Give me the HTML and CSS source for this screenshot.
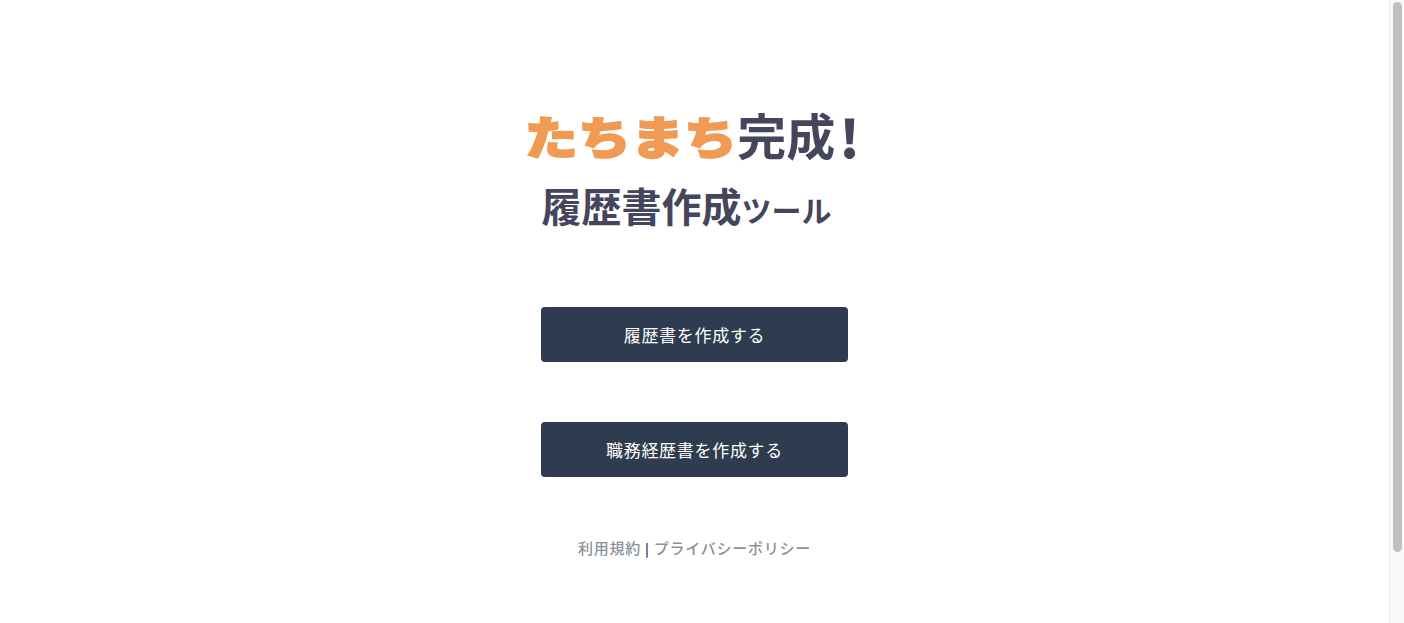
FILE: index.html
```html
<!DOCTYPE html>
<html lang="ja">
<head>
<meta charset="UTF-8">
<meta name="viewport" content="width=device-width, initial-scale=1.0">
<title>履歴書作成ツール</title>
<link rel="stylesheet" href="styles.css">
</head>
<body>

<div class="page">
  <div class="logo">
    <div class="logo-top"><span class="logo-orange">たちまち</span><span class="logo-done">完成</span><span class="logo-mark">!</span></div>
    <div class="logo-bottom">履歴書作成<span class="logo-small">ツール</span></div>
  </div>

  <a class="btn" href="#">履歴書を作成する</a>
  <a class="btn btn-second" href="#">職務経歴書を作成する</a>

  <div class="footer-links">
    <a href="#">利用規約</a> <span class="sep">|</span> <a href="#">プライバシーポリシー</a>
  </div>
</div>

<div class="scrollbar">
  <div class="scrollbar-thumb"></div>
</div>

</body>
</html>
```

FILE: styles.css
```css
html, body {
  height: 100%;
}
body {
  display: flex;
  margin: 0;
  overflow: hidden;
  background-color: #fff;
  font-family: "Noto Sans CJK JP", "Noto Sans", sans-serif;
  color: #2f3b4e;
}
.page {
  flex: 1;
  display: flex;
  flex-direction: column;
  align-items: center;
  padding-top: 100px;
}
.logo {
  display: flex;
  flex-direction: column;
  align-items: center;
  height: 207px;
  font-weight: 700;
  color: #45465c;
  white-space: nowrap;
}
.logo-top {
  height: 70px;
  line-height: 68px;
}
.logo-orange {
  display: inline-block;
  font-size: 52px;
  font-weight: 900;
  color: #f09a54;
  -webkit-text-stroke: 2px #f09a54;
  transform: scale(1.02, 0.88);
  transform-origin: right center;
}
.logo-done {
  display: inline-block;
  font-size: 49px;
  vertical-align: 3px;
}
.logo-mark {
  margin-left: 4px;
  font-size: 52px;
  font-weight: 900;
}
.logo-bottom {
  margin-top: 3px;
  padding-right: 16px;
  font-size: 40px;
  line-height: 64px;
}
.logo-small {
  font-size: 30px;
}
.btn {
  display: block;
  width: 307px;
  height: 55px;
  line-height: 55px;
  border-radius: 4px;
  background-color: #2f3b4e;
  color: #fff;
  font-size: 17px;
  letter-spacing: 0.7px;
  text-align: center;
  text-decoration: none;
}
.btn-second {
  margin-top: 60px;
}
.footer-links {
  margin-top: 59px;
  font-size: 15px;
  line-height: 24px;
  letter-spacing: 0.75px;
  color: #2f3b4e;
}
.footer-links a {
  color: #8a9097;
  font-weight: 500;
  text-decoration: none;
}
.sep {
  font-size: 13px;
  font-weight: 700;
}
.scrollbar {
  flex: none;
  width: 15px;
  height: 100%;
  box-sizing: border-box;
  padding: 2px 2px 0 3px;
  background-color: #fafafa;
  border-left: 1px solid #ececec;
}
.scrollbar-thumb {
  height: 550px;
  border-radius: 5px;
  background-color: #c1c1c1;
}
```
